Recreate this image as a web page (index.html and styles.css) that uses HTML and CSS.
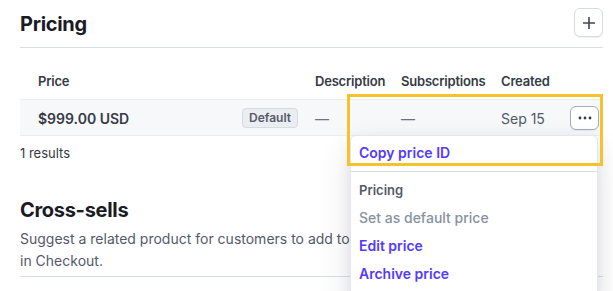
FILE: index.html
```html
<!DOCTYPE html>
<html lang="en">
<head>
<meta charset="utf-8">
<title>Pricing</title>
<link rel="stylesheet" href="styles.css">
</head>
<body>
<div class="page">
  <section class="pricing">
    <header class="section-head">
      <h2 class="section-title">Pricing</h2>
      <button class="icon-btn plus-btn" aria-label="Add price">
        <svg width="12" height="12" viewBox="0 0 12 12"><path d="M6 0.5v11M0.5 6h11" stroke="#414552" stroke-width="1.6" stroke-linecap="round"/></svg>
      </button>
    </header>
    <div class="table">
      <div class="tr th">
        <div class="cell">Price</div>
        <div class="cell">Description</div>
        <div class="cell">Subscriptions</div>
        <div class="cell">Created</div>
        <div class="cell"></div>
      </div>
      <div class="tr td">
        <div class="cell price-cell"><span class="amount">$999.00 USD</span><span class="badge">Default</span></div>
        <div class="cell dash">—</div>
        <div class="cell dash">—</div>
        <div class="cell date">Sep 15</div>
        <div class="cell act">
          <button class="icon-btn more-btn" aria-label="More">
            <svg width="14" height="4" viewBox="0 0 14 4"><circle cx="2" cy="2" r="1.4" fill="#353a44"/><circle cx="7" cy="2" r="1.4" fill="#353a44"/><circle cx="12" cy="2" r="1.4" fill="#353a44"/></svg>
          </button>
        </div>
      </div>
    </div>
    <p class="results">1 results</p>
  </section>
  <section class="cross">
    <h2 class="section-title">Cross-sells</h2>
    <p class="desc">Suggest a related product for customers to add to<br>in Checkout.</p>
  </section>

  <div class="menu">
    <div class="menu-item link">Copy price ID</div>
    <div class="menu-sep"></div>
    <div class="menu-label">Pricing</div>
    <div class="menu-item disabled">Set as default price</div>
    <div class="menu-item link">Edit price</div>
    <div class="menu-item link">Archive price</div>
  </div>
  <div class="highlight"></div>
</div>
</body>
</html>
```

FILE: styles.css
```css
* { box-sizing: border-box; }
html, body { margin: 0; padding: 0; background: #fff; }
body {
  font-family: Inter, "Noto Sans", "Liberation Sans", sans-serif;
  color: #353a44;
  -webkit-font-smoothing: antialiased;
}
.page {
  position: relative;
  width: 613px;
  height: 291px;
  overflow: hidden;
  padding: 0 10px 0 20px;
}
.section-head {
  display: flex;
  justify-content: space-between;
  align-items: flex-start;
  height: 48px;
  padding-top: 8px;
  border-bottom: 1px solid #d8dee4;
}
.section-title {
  margin: 0;
  font-size: 20px;
  line-height: 28px;
  font-weight: 700;
  color: #1a1b25;
  letter-spacing: -0.3px;
}
.section-head .section-title { padding-top: 2px; }
.icon-btn {
  display: flex;
  align-items: center;
  justify-content: center;
  background: #fff;
  border: 1px solid #d5dbe1;
  border-radius: 6px;
  box-shadow: 0 1px 1px rgba(0,0,0,0.06);
  padding: 0;
  margin: 0;
}
.plus-btn { width: 29px; height: 29px; }
.more-btn { width: 29px; height: 24px; border-color: #a3acba; }

.table { margin-top: 23px; }
.tr {
  display: grid;
  grid-template-columns: 277px 86px 100px 1fr 29px;
  padding: 0 4px 0 18px;
  align-items: center;
}
.th {
  font-size: 13px;
  line-height: 20px;
  font-weight: 600;
  color: #353a44;
  letter-spacing: -0.2px;
  padding-bottom: 8px;
}
.td {
  height: 37px;
  background: #f6f8fa;
  border-top: 1px solid #ebeef1;
  border-bottom: 1px solid #ebeef1;
  font-size: 14px;
  line-height: 20px;
}
.price-cell {
  display: flex;
  justify-content: space-between;
  align-items: center;
  padding-right: 17px;
}
.amount { font-weight: 600; color: #353a44; padding-top: 3px; }
.badge {
  display: inline-block;
  height: 20px;
  padding: 0 6px;
  font-size: 12px;
  line-height: 18px;
  font-weight: 600;
  color: #545969;
  background: #ebeef1;
  border: 1px solid #d5dbe1;
  border-radius: 4px;
}
.dash { color: #687385; padding-top: 2px; }
.date { color: #545969; padding-top: 3px; }
.act { display: flex; justify-content: flex-end; }

.results {
  margin: 7px 0 0;
  font-size: 13px;
  line-height: 20px;
  color: #353a44;
}
.cross { margin-top: 33px; }
.desc {
  margin: 4px 0 0;
  font-size: 14px;
  line-height: 22px;
  color: #545969;
  padding-bottom: 4px;
  border-bottom: 1px solid #d8dee4;
}

.menu {
  position: absolute;
  left: 350px;
  top: 135px;
  width: 248px;
  height: 170px;
  background: #fff;
  border: 1px solid #e3e8ee;
  border-radius: 6px;
  padding-top: 3px;
  box-shadow: 0 15px 35px rgba(49,49,93,0.12), 0 5px 15px rgba(0,0,0,0.08);
}
.menu-item {
  padding: 4px 8px;
  font-size: 14px;
  line-height: 20px;
  font-weight: 600;
}
.menu-item.link { color: #533afd; }
.menu-item.disabled { color: #8792a2; font-weight: 500; }
.menu-sep { height: 1px; background: #d8dee4; margin: 4px 0 0; }
.menu-label {
  padding: 8px 8px 4px;
  font-size: 13px;
  line-height: 20px;
  font-weight: 600;
  color: #545969;
}
.highlight {
  position: absolute;
  left: 347px;
  top: 94px;
  width: 256px;
  height: 72px;
  border: 3px solid #f6c22c;
  pointer-events: none;
}
```
